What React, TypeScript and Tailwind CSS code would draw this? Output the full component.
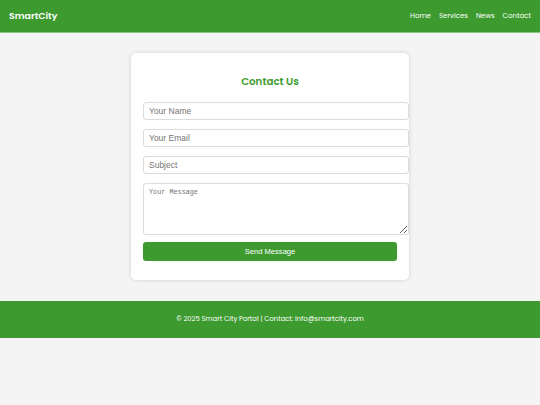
import React from "react";

const NAV = ["Home", "Services", "News", "Contact"];

const inputCls =
  "box-content block w-full h-[16px] px-[5px] py-0 border border-[#dcdcdc] rounded-[3px] bg-white text-[8.5px] text-[#333] placeholder:text-[#757575] outline-none";

export default function App() {
  return (
    <div className="min-h-[405px] bg-[#f4f4f4] font-['Poppins','Open_Sans',sans-serif]">
      {/* header */}
      <header className="h-[32px] bg-[#3c9a2e] flex items-center justify-between px-[9px] shadow-[0_1px_0_#8fc784]">
        <div className="text-white text-[9.4px] font-semibold">SmartCity</div>
        <nav className="flex items-center gap-[8px]">
          {NAV.map((n) => (
            <a key={n} className="text-white text-[7px]">
              {n}
            </a>
          ))}
        </nav>
      </header>

      {/* contact form */}
      <main className="pt-[21px] pb-[21px] flex justify-center">
        <div className="w-[278px] bg-white rounded-[5px] shadow-[0_0_4px_rgba(0,0,0,0.15)] px-[12px] pt-[22px] pb-[19px]">
          <h2 className="text-center text-[#3c9a2e] text-[10.3px] font-semibold leading-[14px] mb-[13px]">
            Contact Us
          </h2>
          <form className="flex flex-col gap-[9px] font-['Liberation_Sans',Arial,sans-serif]">
            <input className={inputCls} placeholder="Your Name" />
            <input className={inputCls} placeholder="Your Email" />
            <input className={inputCls} placeholder="Subject" />
            <textarea
              className="box-content block w-full h-[44px] px-[5px] py-[3px] border border-[#dcdcdc] rounded-[3px] bg-white text-[6.8px] font-['Liberation_Mono',monospace] placeholder:text-[#757575] outline-none resize-y"
              placeholder="Your Message"
            />
            <button
              type="button"
              className="mt-[-2px] h-[19px] w-full bg-[#3c9a2e] text-white text-[7.6px] rounded-[3px]"
            >
              Send Message
            </button>
          </form>
        </div>
      </main>

      {/* footer */}
      <footer className="h-[37px] bg-[#3c9a2e] flex items-center justify-center">
        <p className="text-white text-[6.8px]">© 2025 Smart City Portal | Contact: info@smartcity.com</p>
      </footer>
    </div>
  );
}
